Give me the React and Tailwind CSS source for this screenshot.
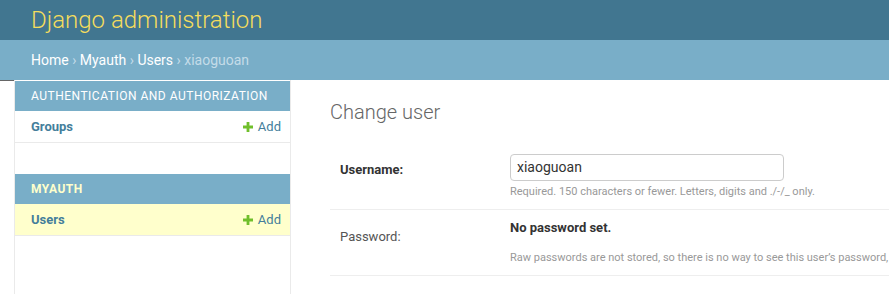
const PlusIcon = () => (
  <svg width="10" height="10" viewBox="0 0 10 10" className="shrink-0">
    <path d="M3.6 0h2.8v3.6H10v2.8H6.4V10H3.6V6.4H0V3.6h3.6z" fill="#70bf2b" />
  </svg>
);

const ModelRow = ({ name, current }) => (
  <div
    className={`h-[32px] border-b border-[#eaeaea] flex items-center justify-between pl-[16px] pr-[9px] ${
      current ? "bg-[#ffffcc]" : "bg-white"
    }`}
  >
    <span className="text-[13px] font-bold text-[#447e9b]">{name}</span>
    <span className="flex items-center gap-[5px] text-[13px] text-[#447e9b]">
      <PlusIcon />
      Add
    </span>
  </div>
);

const App = () => {
  return (
    <div className="min-h-screen h-[294px] overflow-hidden flex flex-col bg-white text-[#333] font-[Roboto,'Liberation_Sans',sans-serif]">
      {/* header */}
      <div className="h-[40px] shrink-0 bg-[#417690] px-[31px] flex items-center">
        <span className="text-[24px] font-light text-[#f5dd5d] leading-none">
          Django administration
        </span>
      </div>

      {/* breadcrumbs */}
      <div className="h-[40px] shrink-0 bg-[#79aec8] px-[31px] flex items-center text-[14px] text-white whitespace-pre">
        <span>Home</span>
        <span className="text-[#c4dce8]"> › </span>
        <span>Myauth</span>
        <span className="text-[#c4dce8]"> › </span>
        <span>Users</span>
        <span className="text-[#c4dce8]"> › xiaoguoan</span>
      </div>

      <div className="flex flex-1">
        {/* toggle strip */}
        <div className="w-[14px] shrink-0 border-t border-[#666]" />

        {/* nav sidebar */}
        <div className="w-[277px] shrink-0 border-l border-r border-[#eaeaea] pt-[1px]">
          <div className="mb-[31px]">
            <div className="h-[30px] bg-[#79aec8] flex items-center pl-[16px] text-[12px] text-white tracking-[0.5px] uppercase">
              Authentication and Authorization
            </div>
            <ModelRow name="Groups" />
          </div>
          <div>
            <div className="h-[30px] bg-[#79aec8] flex items-center pl-[16px] text-[12px] font-bold text-[#ffffcc] tracking-[0.5px] uppercase">
              Myauth
            </div>
            <ModelRow name="Users" current />
          </div>
        </div>

        {/* content */}
        <div className="flex-1 min-w-0 pl-[39px] pt-[20px]">
          <h1 className="text-[20px] font-light text-[#666] leading-[24px] mb-[20px]">
            Change user
          </h1>

          <div className="border-b border-[#eee] pl-[10px] pt-[10px] pb-[10px] flex">
            <div className="w-[170px] shrink-0 pt-[8px] text-[13px] font-bold leading-[16px] text-[#333]">
              Username:
            </div>
            <div className="min-w-0">
              <div className="w-[274px] h-[27px] border border-[#ccc] rounded-[4px] flex items-center px-[6px] text-[14px] text-[#333]">
                xiaoguoan
              </div>
              <div className="mt-[4px] text-[11px] leading-[14px] text-[#999] whitespace-nowrap">
                Required. 150 characters or fewer. Letters, digits and ./-/_ only.
              </div>
            </div>
          </div>

          <div className="border-b border-[#eee] pl-[10px] pt-[10px] pb-[10px] flex">
            <div className="w-[170px] shrink-0 pt-[9px] text-[13px] leading-[16px] text-[#555]">
              Password:
            </div>
            <div className="min-w-0">
              <div className="text-[13px] font-bold leading-[16px] text-[#333]">
                No password set.
              </div>
              <div className="mt-[15px] text-[11px] leading-[14px] text-[#999] whitespace-nowrap">
                Raw passwords are not stored, so there is no way to see this user’s password, but you can change the password using this form.
              </div>
            </div>
          </div>
        </div>
      </div>
    </div>
  );
};

export default App;
